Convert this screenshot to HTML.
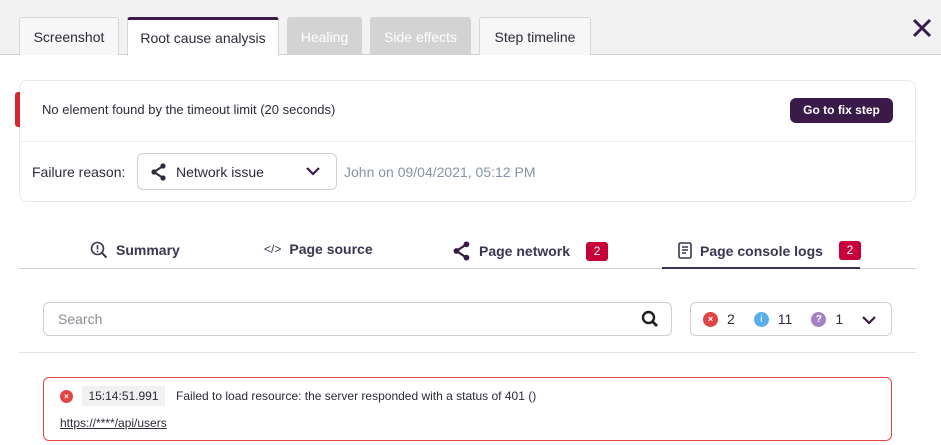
<!DOCTYPE html>
<html><head><style>
*{margin:0;padding:0;box-sizing:border-box}
body{width:941px;height:445px;background:#fff;font-family:"Liberation Sans",sans-serif;color:#2b2b3a;position:relative;overflow:hidden;font-size:13px}
.a{position:absolute}
.tab{position:absolute;top:17px;height:38px;border:1px solid #d6d6d6;border-bottom:none;border-radius:3px 3px 0 0;background:#f7f7f7;font-size:14px;line-height:38px;text-align:center;color:#2b2b3a}
.dis{background:#d3d3d3;color:#fff;border-color:#d3d3d3}
.st{position:absolute;top:241px;font-size:14px;font-weight:bold;color:#3a3550;display:flex;align-items:center;gap:8px}
.badge{background:#c8003a;color:#fff;font-weight:normal;font-size:12px;width:22px;height:19px;line-height:19px;text-align:center;border-radius:3px;margin-left:8px}
</style></head><body>
<div class="a" style="left:0;top:0;width:941px;height:55px;background:#f2f2f2;border-bottom:1px solid #cfcfcf"></div>
<div class="tab" style="left:19px;width:100px">Screenshot</div>
<div class="tab" style="left:127px;width:152px;background:#fff;border-top:3px solid #3a1a48;height:39px;line-height:36px">Root cause analysis</div>
<div class="tab dis" style="left:287px;width:75px">Healing</div>
<div class="tab dis" style="left:370px;width:101px">Side effects</div>
<div class="tab" style="left:479px;width:112px">Step timeline</div>
<svg class="a" style="left:912px;top:18px" width="20" height="20" viewBox="0 0 20 20"><path d="M2 2L18 18M18 2L2 18" stroke="#3a1a48" stroke-width="3"/></svg>

<div class="a" style="left:19px;top:80px;width:897px;height:122px;border:1px solid #e8e8e8;border-radius:8px"></div>
<div class="a" style="left:15px;top:92px;width:5px;height:35px;background:#d9262e;border-radius:3px 0 0 3px"></div>
<div class="a" style="left:42px;top:102px">No element found by the timeout limit (20 seconds)</div>
<div class="a" style="left:790px;top:98px;width:103px;height:25px;background:#3a1a48;border-radius:6px;color:#fff;font-weight:bold;font-size:12px;line-height:25px;text-align:center">Go to fix step</div>
<div class="a" style="left:20px;top:141px;width:895px;height:1px;background:#ececec"></div>
<div class="a" style="left:32px;top:164px;font-size:14px">Failure reason:</div>
<div class="a" style="left:137px;top:153px;width:200px;height:37px;border:1px solid #cfcfcf;border-radius:6px"></div>
<svg class="a" style="left:151px;top:163px" width="16" height="18" viewBox="0 0 16 18"><circle cx="12" cy="3" r="2.6" fill="#2b2b3a"/><circle cx="3" cy="9" r="2.6" fill="#2b2b3a"/><circle cx="12" cy="15" r="2.6" fill="#2b2b3a"/><path d="M12 3L3 9L12 15" stroke="#2b2b3a" stroke-width="2" fill="none"/></svg>
<div class="a" style="left:176px;top:164px;font-size:14px">Network issue</div>
<svg class="a" style="left:305px;top:165px" width="16" height="12" viewBox="0 0 16 12"><path d="M2 3L8 9L14 3" stroke="#3a1a48" stroke-width="2.2" fill="none"/></svg>
<div class="a" style="left:344px;top:164px;font-size:14px;color:#8593a3">John on 09/04/2021, 05:12 PM</div>

<div class="st" style="left:90px"><svg width="18" height="18" viewBox="0 0 18 18"><circle cx="7.5" cy="7.5" r="6" stroke="#3a3550" stroke-width="1.6" fill="none"/><path d="M12 12L16.5 16.5" stroke="#3a3550" stroke-width="2"/><path d="M7.5 4v4.5" stroke="#3a3550" stroke-width="1.6"/><circle cx="7.5" cy="10.5" r="0.9" fill="#3a3550"/></svg>Summary</div>
<div class="st" style="left:264px"><span style="font-weight:normal;font-size:12px">&lt;/&gt;</span>Page source</div>
<div class="st" style="left:453px"><svg width="18" height="20" viewBox="0 0 16 18"><circle cx="12" cy="3" r="2.6" fill="#3a1a48"/><circle cx="3" cy="9" r="2.6" fill="#3a1a48"/><circle cx="12" cy="15" r="2.6" fill="#3a1a48"/><path d="M12 3L3 9L12 15" stroke="#3a1a48" stroke-width="2" fill="none"/></svg>Page network<span class="badge">2</span></div>
<div class="st" style="left:678px"><svg width="14" height="17" viewBox="0 0 14 17"><rect x="1" y="1" width="12" height="15" rx="1.5" stroke="#3a3550" stroke-width="1.6" fill="none"/><path d="M4 5h6M4 8h6M4 11h4" stroke="#3a3550" stroke-width="1.4"/></svg>Page console logs<span class="badge">2</span></div>
<div class="a" style="left:19px;top:268px;width:897px;height:1px;background:#d0d0d0"></div>
<div class="a" style="left:662px;top:267px;width:198px;height:2px;background:#3a3550"></div>

<div class="a" style="left:43px;top:302px;width:629px;height:34px;border:1px solid #cfcfcf;border-radius:6px"></div>
<div class="a" style="left:58px;top:311px;font-size:14px;color:#8b8b95">Search</div>
<svg class="a" style="left:641px;top:310px" width="18" height="18" viewBox="0 0 18 18"><circle cx="7.5" cy="7.5" r="5.5" stroke="#222" stroke-width="2.4" fill="none"/><path d="M11.5 11.5L16 16" stroke="#222" stroke-width="2.8"/></svg>
<div class="a" style="left:690px;top:302px;width:202px;height:34px;border:1px solid #cfcfcf;border-radius:6px"></div>
<div class="a" style="left:703px;top:311px;font-size:14px;display:flex;align-items:center;gap:0">
<span style="width:15px;height:15px;border-radius:50%;background:#e04444;color:#fff;font-size:9px;line-height:15px;text-align:center;font-weight:bold">×</span><span style="margin:0 19px 0 9px">2</span>
<span style="width:15px;height:15px;border-radius:50%;background:#5aaee8;color:#fff;font-size:10px;line-height:15px;text-align:center">i</span><span style="margin:0 19px 0 9px">11</span>
<span style="width:15px;height:15px;border-radius:50%;background:#a681c6;color:#fff;font-size:10px;line-height:15px;text-align:center;font-weight:bold">?</span><span style="margin:0 0 0 9px">1</span></div>
<svg class="a" style="left:861px;top:314px" width="16" height="12" viewBox="0 0 16 12"><path d="M2 3L8 9L14 3" stroke="#3a1a48" stroke-width="2.2" fill="none"/></svg>
<div class="a" style="left:19px;top:352px;width:897px;height:1px;background:#e2e2e2"></div>

<div class="a" style="left:43px;top:377px;width:849px;height:64px;border:1px solid #e8453c;border-radius:6px"></div>
<div class="a" style="left:60px;top:390px;width:13px;height:13px;border-radius:50%;background:#e04444;color:#fff;font-size:8px;line-height:13px;text-align:center;font-weight:bold">×</div>
<div class="a" style="left:82px;top:386px;width:83px;height:20px;background:#f1f1f1;font-size:12px;line-height:20px;text-align:center">15:14:51.991</div>
<div class="a" style="left:176px;top:389px;font-size:12px">Failed to load resource: the server responded with a status of 401 ()</div>
<div class="a" style="left:60px;top:416px;font-size:12px;text-decoration:underline">https://****/api/users</div>
</body></html>
